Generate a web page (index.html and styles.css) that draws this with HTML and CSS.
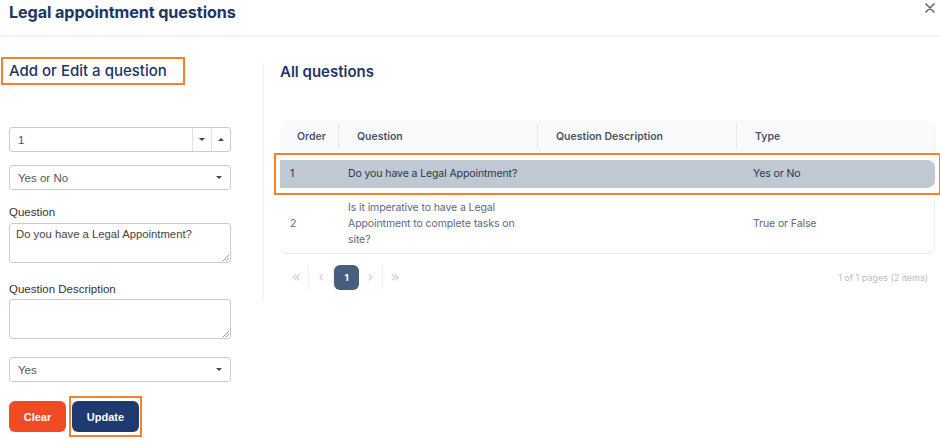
FILE: index.html
```html
<!DOCTYPE html>
<html>
<head>
<meta charset="utf-8">
<link rel="stylesheet" href="styles.css">
</head>
<body>
<div class="modal">
  <div class="modal-header">
    <h1 class="modal-title">Legal appointment questions</h1>
    <svg class="close" width="10" height="10" viewBox="0 0 10 10"><path d="M1 1 L9 9 M9 1 L1 9" stroke="#6b6b6b" stroke-width="1.7" stroke-linecap="round"/></svg>
  </div>
  <div class="modal-body">
    <div class="left">
      <h2 class="section-title boxed">Add or Edit a question</h2>
      <div class="spin-input">
        <span class="spin-value">1</span>
        <span class="spin-btn"><span class="tri-down"></span></span>
        <span class="spin-btn"><span class="tri-up"></span></span>
      </div>
      <div class="select sel-type"><span>Yes or No</span><span class="tri-down"></span></div>
      <label class="field-label lbl-q">Question</label>
      <div class="textarea">Do you have a Legal Appointment?<span class="grip"></span></div>
      <label class="field-label lbl-d">Question Description</label>
      <div class="textarea"><span class="grip"></span></div>
      <div class="select sel-ans"><span>Yes</span><span class="tri-down"></span></div>
      <div class="actions">
        <button class="btn btn-clear">Clear</button>
        <span class="focus-box"><button class="btn btn-update">Update</button></span>
      </div>
    </div>
    <div class="right">
      <h2 class="section-title">All questions</h2>
      <div class="table">
        <div class="thead">
          <div class="th c1">Order</div>
          <div class="th c2">Question</div>
          <div class="th c3">Question Description</div>
          <div class="th c4">Type</div>
        </div>
        <div class="row-focus">
          <div class="tr selected">
            <div class="td c1">1</div>
            <div class="td c2 nowrap">Do you have a Legal Appointment?</div>
            <div class="td c3"></div>
            <div class="td c4">Yes or No</div>
          </div>
        </div>
        <div class="tr row2">
          <div class="td c1">2</div>
          <div class="td c2">Is it imperative to have a Legal Appointment to complete tasks on site?</div>
          <div class="td c3"></div>
          <div class="td c4">True or False</div>
        </div>
      </div>
      <div class="pager">
        <div class="pages">
          <span class="pg sep">&#xAB;</span>
          <span class="pg sep">&#x2039;</span>
          <span class="pg current">1</span>
          <span class="pg narrow">&#x203A;</span>
          <span class="pg sepl">&#xBB;</span>
        </div>
        <div class="pager-info">1 of 1 pages (2 items)</div>
      </div>
    </div>
  </div>
</div>
</body>
</html>
```
FILE: styles.css
```css
* { box-sizing: border-box; }
html, body { margin: 0; padding: 0; background: #fff; }
body { font-family: Inter, "Liberation Sans", sans-serif; width: 940px; height: 441px; overflow: hidden; }

.modal-header {
  height: 37px;
  border-bottom: 2px solid #f2f3f4;
  display: flex;
  justify-content: space-between;
  align-items: flex-start;
  padding: 0 5px 0 9px;
}
.modal-title {
  margin: 0;
  margin-top: 1px;
  font-size: 16.2px;
  font-weight: 700;
  color: #1e3566;
  letter-spacing: -0.1px;
  line-height: 22px;
}
.close { margin-top: 3px; }

.modal-body { display: flex; }

.left {
  width: 263px;
  padding: 20px 0 0 9px;
}
.section-title {
  margin: 0;
  font-size: 15px;
  font-weight: 500;
  color: #1e3566;
  line-height: 20px;
}
.boxed {
  display: inline-block;
  margin-left: -8px;
  border: 2px solid #f6812c;
  padding: 2px 16px 1px 6px;
  height: 28px;
}

.spin-input, .select {
  width: 222px;
  height: 25px;
  border: 1px solid #c9ccd0;
  border-radius: 3px;
  font-family: "Liberation Sans", Arial, sans-serif;
  font-size: 11.5px;
  color: #555;
  display: flex;
  align-items: center;
}
.spin-input { margin-top: 42px; }
.spin-value { flex: 1; padding-left: 8px; }
.spin-btn {
  width: 19px;
  height: 100%;
  border-left: 1px solid #dde0e3;
  display: flex;
  align-items: center;
  justify-content: center;
}
.tri-down {
  width: 0; height: 0;
  border-left: 3px solid transparent;
  border-right: 3px solid transparent;
  border-top: 3px solid #444;
}
.tri-up {
  width: 0; height: 0;
  border-left: 3px solid transparent;
  border-right: 3px solid transparent;
  border-bottom: 3px solid #444;
}
.select { justify-content: space-between; padding: 0 8px; }
.sel-type { margin-top: 13px; }
.sel-ans { margin-top: 18px; }

.field-label {
  display: block;
  font-family: "Liberation Sans", Arial, sans-serif;
  font-size: 11.5px;
  color: #333;
  line-height: 14px;
}
.lbl-q { margin-top: 15px; margin-bottom: 4px; }
.lbl-d { margin-top: 19px; margin-bottom: 3px; }

.textarea {
  position: relative;
  width: 222px;
  height: 40px;
  border: 1px solid #c9ccd0;
  border-radius: 3px;
  font-family: "Liberation Sans", Arial, sans-serif;
  font-size: 11.3px;
  color: #444;
  padding: 4px 6px;
}
.grip {
  position: absolute;
  right: 1px; bottom: 1px;
  width: 6px; height: 6px;
  background: linear-gradient(135deg, transparent 45%, #999 45%, #999 55%, transparent 55%, transparent 70%, #999 70%, #999 80%, transparent 80%);
}

.actions {
  margin-top: 14px;
  display: flex;
  align-items: center;
}
.btn {
  height: 31px;
  border: none;
  border-radius: 6px;
  color: #fff;
  font-family: "Liberation Sans", Arial, sans-serif;
  font-size: 11px;
  font-weight: 700;
  padding: 0;
}
.btn-clear { width: 57px; background: #ef4b24; }
.btn-update { width: 67px; background: #1e3a6e; }
.focus-box {
  margin-left: 3px;
  border: 2px solid #f6812c;
  padding: 3px 1px;
  display: flex;
}

.right {
  flex: 1;
  border-left: 1px solid #f0f1f2;
  margin-top: 24px;
  height: 240px;
  padding: 0 5px 0 16px;
}
.right .section-title { margin-top: 1px; font-weight: 600; }

.table {
  margin-top: 38px;
  width: 655px;
  border-radius: 8px;
  border-right: 1px solid #eef0f2;
  border-bottom: 1px solid #e6e8eb;
}
.thead {
  display: flex;
  height: 32px;
  background: #f9fafb;
  border-radius: 8px 8px 0 0;
  align-items: center;
}
.th {
  font-size: 10.5px;
  font-weight: 600;
  color: #4a5568;
  height: 26px;
  display: flex;
  align-items: center;
  padding-left: 18px;
}
.th.c1 { padding-left: 17px; }
.th + .th { border-left: 1px solid #e4e7eb; }
.c1 { width: 58px; }
.c2 { width: 199px; }
.c3 { width: 199px; }
.c4 { width: 197px; }

.row-focus {
  margin: 1px -7px 0 -6px;
  border: 2px solid #f6812c;
  padding: 5px 4px 5px 4px;
}
.tr { display: flex; align-items: center; }
.td {
  font-size: 10.5px;
  color: #3d4a5e;
  padding-left: 10px;
  line-height: 16px;
  letter-spacing: -0.1px;
}
.td.c2 { padding-left: 10px; padding-right: 12px; }
.td.nowrap { white-space: nowrap; }
.td.c4 { padding-left: 17px; }
.selected {
  background: #c0c8d3;
  height: 28px;
  border-radius: 0 8px 8px 0;
}
.selected .td { color: #2a3648; }
.row2 { height: 58px; }
.row2 .td { color: #5c6a80; }

.pager {
  display: flex;
  justify-content: space-between;
  align-items: center;
  margin-top: 11px;
  width: 648px;
  padding-left: 4px;
}
.pages { display: flex; align-items: center; }
.pg {
  width: 25px;
  height: 25px;
  display: flex;
  align-items: center;
  justify-content: center;
  font-size: 15px;
  color: #c3cad6;
  font-family: "DejaVu Sans", sans-serif;
  padding-bottom: 2px;
}
.pg.narrow { width: 23px; }
.pg.sep { border-right: 1px solid #f0f1f3; }
.pg.sepl { border-left: 1px solid #f0f1f3; }
.pg.current {
  background: #485e7e;
  color: #fff;
  border-radius: 6px;
  font-family: Inter, sans-serif;
  font-size: 9.5px;
  font-weight: 700;
  padding-bottom: 0;
}
.pager-info {
  font-size: 9px;
  color: #b9c0cc;
}
```
